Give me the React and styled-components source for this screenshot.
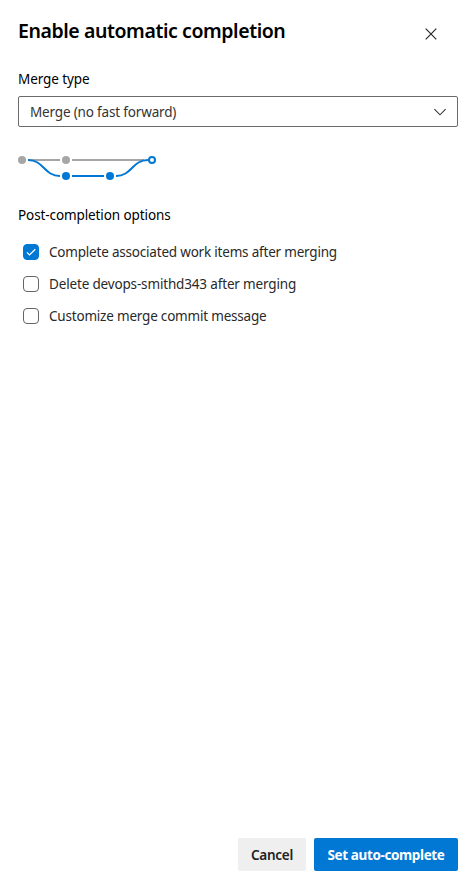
import React, { useState } from "react";
import styled, { createGlobalStyle } from "styled-components";

const GlobalStyle = createGlobalStyle`
  * { box-sizing: border-box; }
  body {
    margin: 0;
    background: #fff;
    color: #212121;
    font-family: "Segoe UI", "Noto Sans", sans-serif;
    font-size: 13.5px;
  }
`;

const Panel = styled.div`
  display: flex;
  flex-direction: column;
  height: 885px;
  padding: 16px 18px 14px;
  border-radius: 3px 3px 0 0;
  background: #fff;
`;

const Header = styled.header`
  display: flex;
  justify-content: space-between;
  height: 53px;
  padding-right: 11px;
`;

const Title = styled.h1`
  margin: 0;
  color: #000;
  font-size: 19.5px;
  font-weight: 600;
  line-height: 30px;
  letter-spacing: -0.42px;
  white-space: nowrap;
`;

const CloseButton = styled.button`
  display: flex;
  align-items: center;
  justify-content: center;
  width: 32px;
  height: 32px;
  margin-top: 2px;
  padding: 0;
  border: 0;
  background: transparent;
`;

const FieldLabel = styled.div`
  height: 20px;
  line-height: 20px;
  color: #000;
  white-space: nowrap;
  letter-spacing: -0.1px;
`;

const Select = styled.button`
  display: flex;
  align-items: center;
  justify-content: space-between;
  height: 31px;
  margin-top: 7px;
  padding: 0 10px 0 11px;
  border: 1px solid #6b6b6b;
  border-radius: 2px;
  background: #fff;
  color: #333;
  font: inherit;
  letter-spacing: -0.17px;
`;

const Graph = styled.svg`
  display: block;
  width: 160px;
  height: 36px;
  margin: 23px 0 19px -4px;
`;

const Options = styled.div`
  display: flex;
  flex-direction: column;
  flex: 1;
  padding: 11px 0 0 5px;
`;

const Option = styled.label`
  display: flex;
  align-items: center;
  gap: 10px;
  height: 32px;
  color: #292929;
  white-space: nowrap;
  letter-spacing: ${(p) => p.$tracking}px;
`;

const OptionText = styled.span`
  line-height: 20px;
  padding-bottom: 1px;
`;

const Box = styled.span`
  display: flex;
  align-items: center;
  justify-content: center;
  width: 16px;
  height: 16px;
  border: 1px solid ${(p) => (p.$checked ? "#0078d4" : "#666")};
  border-radius: 4px;
  background: ${(p) => (p.$checked ? "#0078d4" : "#fff")};
`;

const HiddenInput = styled.input`
  display: none;
`;

const Footer = styled.footer`
  display: flex;
  justify-content: flex-end;
  gap: 8px;
`;

const Button = styled.button`
  width: ${(p) => (p.$primary ? 144 : 68)}px;
  height: 33px;
  padding: 0;
  border: 0;
  border-radius: 2px;
  background: ${(p) => (p.$primary ? "#0078d4" : "#efefef")};
  color: ${(p) => (p.$primary ? "#fff" : "#212121")};
  font: inherit;
  font-weight: ${(p) => (p.$primary ? 700 : 600)};
  letter-spacing: ${(p) => (p.$primary ? -0.38 : -0.25)}px;
  white-space: nowrap;
`;

const OPTIONS = [
  { label: "Complete associated work items after merging", checked: true, tracking: -0.2 },
  { label: "Delete devops-smithd343 after merging", checked: false, tracking: -0.16 },
  { label: "Customize merge commit message", checked: false, tracking: -0.2 },
];

function MergeGraph() {
  return (
    <Graph viewBox="0 0 160 36" fill="none" strokeWidth="2">
      <path d="M14 10H46M58 10H130" stroke="#a6a6a6" />
      <circle cx="8" cy="10" r="4" fill="#a6a6a6" />
      <circle cx="52" cy="10" r="4" fill="#a6a6a6" />
      <path
        d="M14 10C30 10 30 26 46 26M58 26H90M102 26C118 26 118 10 134 10"
        stroke="#0078d4"
      />
      <circle cx="52" cy="26" r="4" fill="#0078d4" />
      <circle cx="96" cy="26" r="4" fill="#0078d4" />
      <circle cx="138" cy="10" r="3" fill="#fff" stroke="#0078d4" />
    </Graph>
  );
}

export default function App() {
  const [checks, setChecks] = useState(OPTIONS.map((o) => o.checked));
  const toggle = (i) => setChecks(checks.map((c, j) => (i === j ? !c : c)));
  return (
    <>
      <GlobalStyle />
      <Panel>
        <Header>
          <Title>Enable automatic completion</Title>
          <CloseButton aria-label="Close">
            <svg width="12" height="12" viewBox="0 0 12 12" fill="none" stroke="#212121" strokeWidth="1.1">
              <path d="M.7 .7 11.3 11.3M11.3 .7 .7 11.3" />
            </svg>
          </CloseButton>
        </Header>
        <FieldLabel>Merge type</FieldLabel>
        <Select>
          <span>Merge (no fast forward)</span>
          <svg width="14" height="8" viewBox="0 0 14 8" fill="none" stroke="#333" strokeWidth="1.1">
            <path d="M1.4 1.2 7 6.8 12.6 1.2" />
          </svg>
        </Select>
        <MergeGraph />
        <FieldLabel>Post-completion options</FieldLabel>
        <Options>
          {OPTIONS.map((o, i) => (
            <Option key={o.label} $tracking={o.tracking}>
              <HiddenInput type="checkbox" checked={checks[i]} onChange={() => toggle(i)} />
              <Box $checked={checks[i]}>
                {checks[i] && (
                  <svg width="12" height="12" viewBox="0 0 12 12" fill="none" stroke="#fff" strokeWidth="1.2">
                    <path d="M1.9 6.3 4.5 8.9 10.3 3.2" />
                  </svg>
                )}
              </Box>
              <OptionText>{o.label}</OptionText>
            </Option>
          ))}
        </Options>
        <Footer>
          <Button>Cancel</Button>
          <Button $primary>Set auto-complete</Button>
        </Footer>
      </Panel>
    </>
  );
}
